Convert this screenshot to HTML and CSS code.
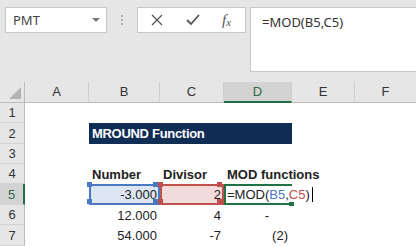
FILE: index.html
```html
<!DOCTYPE html>
<html>
<head lang="en">
    <meta charset="UTF-8">
    <title>MOD</title>
    <link rel="stylesheet" href="styles.css">
</head>
<body>
    <div class="toolbar">
        <div class="name-box">
            <span>PMT</span>
            <span class="drop"></span>
        </div>
        <div class="grip"><i></i><i></i><i></i></div>
        <div class="fx-buttons">
            <svg class="btn" width="12" height="12" viewBox="0 0 12 12"><path d="M1 1 L11 11 M11 1 L1 11" stroke="#555" stroke-width="1.3" fill="none"/></svg>
            <svg class="btn" width="14" height="12" viewBox="0 0 14 12"><path d="M1 6 L5 10 L13 1" stroke="#555" stroke-width="1.8" fill="none"/></svg>
            <span class="fx">f<sub>x</sub></span>
        </div>
        <div class="formula">=MOD(B5,C5)</div>
    </div>

    <div class="sheet">
        <div class="corner"><span></span></div>
        <div class="col-h">A</div>
        <div class="col-h">B</div>
        <div class="col-h">C</div>
        <div class="col-h sel">D</div>
        <div class="col-h">E</div>
        <div class="col-h last">F</div>

        <div class="row-h">1</div>
        <div class="cell wide"></div>

        <div class="row-h">2</div>
        <div class="cell"></div>
        <div class="cell title">MROUND Function</div>
        <div class="cell span2"></div>

        <div class="row-h">3</div>
        <div class="cell wide"></div>

        <div class="row-h">4</div>
        <div class="cell"></div>
        <div class="cell bold">Number</div>
        <div class="cell bold">Divisor</div>
        <div class="cell bold over">MOD functions</div>
        <div class="cell span2"></div>

        <div class="row-h sel">5</div>
        <div class="cell"></div>
        <div class="cell num ref-b">-3.000</div>
        <div class="cell num ref-c">2</div>
        <div class="cell edit">=MOD(<span class="b">B5</span>,<span class="c">C5</span>)<span class="caret"></span></div>
        <div class="cell span2"></div>

        <div class="row-h">6</div>
        <div class="cell"></div>
        <div class="cell num">12.000</div>
        <div class="cell num">4</div>
        <div class="cell num dash">-</div>
        <div class="cell span2"></div>

        <div class="row-h">7</div>
        <div class="cell"></div>
        <div class="cell num">54.000</div>
        <div class="cell num">-7</div>
        <div class="cell num acc">(2)</div>
        <div class="cell span2"></div>
    </div>
</body>
</html>
```

FILE: styles.css
```css
*{
    padding: 0;
    margin: 0;
    box-sizing: border-box;
}
body{
    background: #e6e6e6;
    font-family: "Liberation Sans", Arial, sans-serif;
    overflow: hidden;
}
.toolbar{
    height: 82px;
    display: flex;
    align-items: flex-start;
    padding: 7px 0 0 5px;
    font-family: "Noto Sans", "Open Sans", sans-serif;
    color: #444;
}
.name-box{
    width: 102px;
    height: 26px;
    background: #fff;
    border: 1px solid #c6c6c6;
    display: flex;
    align-items: center;
    justify-content: space-between;
    padding: 0 6px 0 7px;
    font-size: 13px;
}
.drop{
    width: 0;
    height: 0;
    border-left: 4px solid transparent;
    border-right: 4px solid transparent;
    border-top: 4px solid #777;
}
.grip{
    width: 30px;
    height: 26px;
    display: flex;
    flex-direction: column;
    align-items: center;
    justify-content: center;
    gap: 2px;
}
.grip i{
    width: 2px;
    height: 2px;
    background: #b0b0b0;
}
.fx-buttons{
    width: 109px;
    height: 26px;
    background: #fff;
    border: 1px solid #c6c6c6;
    display: flex;
    align-items: center;
    padding-left: 13px;
}
.btn{
    display: block;
}
.btn + .btn{
    margin-left: 23px;
}
.fx{
    margin-left: 22px;
    font-family: "Liberation Serif", serif;
    font-style: italic;
    font-size: 15px;
    color: #555;
}
.fx sub{
    font-size: 11px;
    vertical-align: -1px;
}
.formula{
    flex: 1;
    height: 65px;
    margin-left: 4px;
    background: #fff;
    border: 1px solid #c6c6c6;
    border-right: none;
    padding: 5px 0 0 11px;
    font-size: 13px;
    color: #333;
}
.sheet{
    display: grid;
    grid-template-columns: 25px 64px 71px 64px 68px 63px 1fr;
    grid-template-rows: 21px 20px 21px 20px 20px 21px 20px 21px;
    background: #fff;
    font-size: 13px;
    color: #222;
}
.corner{
    background: #e6e6e6;
    border-right: 1px solid #bcbcbc;
    border-bottom: 1px solid #bcbcbc;
    position: relative;
}
.corner span{
    position: absolute;
    right: 3px;
    bottom: 3px;
    width: 0;
    height: 0;
    border-left: 12px solid transparent;
    border-bottom: 12px solid #b4b4b4;
}
.col-h{
    background: #e6e6e6;
    border-right: 1px solid #cfcfcf;
    border-bottom: 1px solid #bcbcbc;
    text-align: center;
    line-height: 20px;
    color: #333;
}
.col-h.last{
    border-right: none;
}
.col-h.sel{
    background: #d3d3d3;
    border-bottom: 2px solid #217346;
    color: #2f6a47;
}
.row-h{
    background: #e6e6e6;
    border-right: 1px solid #bcbcbc;
    border-bottom: 1px solid #d4d4d4;
    display: flex;
    align-items: center;
    justify-content: center;
    color: #333;
}
.row-h.sel{
    background: #d3d3d3;
    border-right: 2px solid #217346;
    color: #2f6a47;
}
.cell{
    display: flex;
    align-items: center;
    padding: 0 3px;
    white-space: nowrap;
}
.wide{
    grid-column: span 6;
}
.span2{
    grid-column: span 2;
}
.title{
    grid-column: span 3;
    background: #102d55;
    color: #fff;
    font-weight: bold;
    letter-spacing: -0.3px;
}
.bold{
    font-weight: bold;
}
.over{
    overflow: visible;
}
.num{
    justify-content: flex-end;
}
.ref-b,
.ref-c{
    position: relative;
    border: 2px solid #4a78c2;
    background: #dce6f2;
    padding-right: 1px;
}
.ref-c{
    border-color: #c0504d;
    background: #f2dcdb;
}
.ref-b::after,
.ref-c::after{
    content: "";
    position: absolute;
    left: -4px;
    top: -4px;
    width: 5px;
    height: 5px;
    background: #4a78c2;
    box-shadow: 66px 0 #4a78c2, 0 17px #4a78c2, 66px 17px #4a78c2;
}
.ref-c::after{
    background: #c0504d;
    box-shadow: 59px 0 #c0504d, 0 17px #c0504d, 59px 17px #c0504d;
}
.edit{
    position: relative;
    border: 2px solid #217346;
    border-right: none;
    padding-left: 1px;
    z-index: 1;
}
.edit::after{
    content: "";
    position: absolute;
    right: -2px;
    bottom: -3px;
    width: 5px;
    height: 4px;
    background: #217346;
}
.edit .b{
    color: #4a78c2;
}
.edit .c{
    color: #c0504d;
}
.caret{
    flex-shrink: 0;
    width: 1px;
    height: 15px;
    background: #000;
    margin-left: 2px;
}
.dash{
    padding-right: 23px;
}
.acc{
    padding-right: 4px;
}
```
